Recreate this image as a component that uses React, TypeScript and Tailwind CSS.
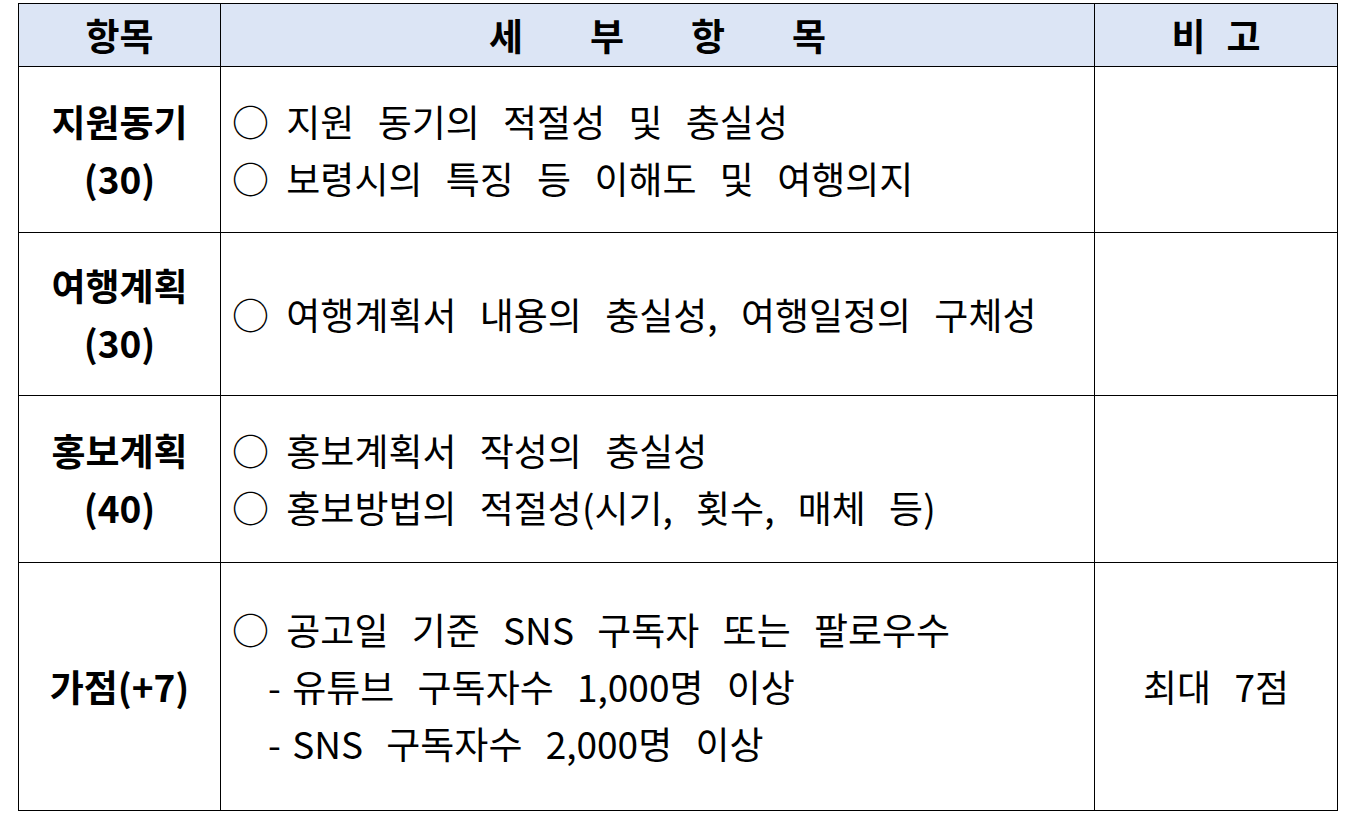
const rows = [
  {
    title: ["지원동기", "(30)"],
    lines: ["지원 동기의 적절성 및 충실성", "보령시의 특징 등 이해도 및 여행의지"],
    h: "h-[166px]",
  },
  {
    title: ["여행계획", "(30)"],
    lines: ["여행계획서 내용의 충실성, 여행일정의 구체성"],
    h: "h-[163px]",
  },
  {
    title: ["홍보계획", "(40)"],
    lines: ["홍보계획서 작성의 충실성", "홍보방법의 적절성(시기, 횟수, 매체 등)"],
    h: "h-[167px]",
  },
];

const subs = ["유튜브 구독자수 1,000명 이상", "SNS 구독자수 2,000명 이상"];

function Bullet({ text }: { text: string }) {
  return (
    <div className="whitespace-nowrap">
      <span className="[word-spacing:9px]">○ </span>
      {text}
    </div>
  );
}

export default function App() {
  return (
    <div className="min-h-screen bg-white pl-[18px] pt-[3px] text-black font-['Noto_Sans_CJK_KR',sans-serif] text-[37px] leading-[57px]">
      <table className="border-collapse w-[1319px] table-fixed">
        <colgroup>
          <col className="w-[202px]" />
          <col className="w-[874px]" />
          <col className="w-[243px]" />
        </colgroup>
        <thead>
          <tr className="h-[63px] bg-[#dce5f5]">
            <th className="border border-black font-bold p-0 align-middle">항목</th>
            <th className="border border-black font-bold p-0 align-middle">
              <div className="flex justify-center gap-[67px]">
                <span>세</span>
                <span>부</span>
                <span>항</span>
                <span>목</span>
              </div>
            </th>
            <th className="border border-black font-bold p-0 align-middle">
              <div className="flex justify-center gap-[21px]">
                <span>비</span>
                <span>고</span>
              </div>
            </th>
          </tr>
        </thead>
        <tbody>
          {rows.map((r) => (
            <tr key={r.title[0]} className={r.h}>
              <td className="border border-black p-0 text-center font-bold align-middle">
                {r.title.map((t) => (
                  <div key={t}>{t}</div>
                ))}
              </td>
              <td className="border border-black p-0 pl-[11px] align-middle [word-spacing:15px]">
                {r.lines.map((l) => (
                  <Bullet key={l} text={l} />
                ))}
              </td>
              <td className="border border-black p-0 align-middle"></td>
            </tr>
          ))}
          <tr className="h-[248px]">
            <td className="border border-black p-0 text-center font-bold align-middle">가점(+7)</td>
            <td className="border border-black p-0 pl-[11px] align-middle [word-spacing:15px]">
              <Bullet text="공고일 기준 SNS 구독자 또는 팔로우수" />
              {subs.map((s) => (
                <div key={s} className="whitespace-nowrap pl-[36px]">
                  <span className="[word-spacing:3px]">- </span>
                  {s}
                </div>
              ))}
            </td>
            <td className="border border-black p-0 text-center align-middle [word-spacing:15px]">최대 7점</td>
          </tr>
        </tbody>
      </table>
    </div>
  );
}
